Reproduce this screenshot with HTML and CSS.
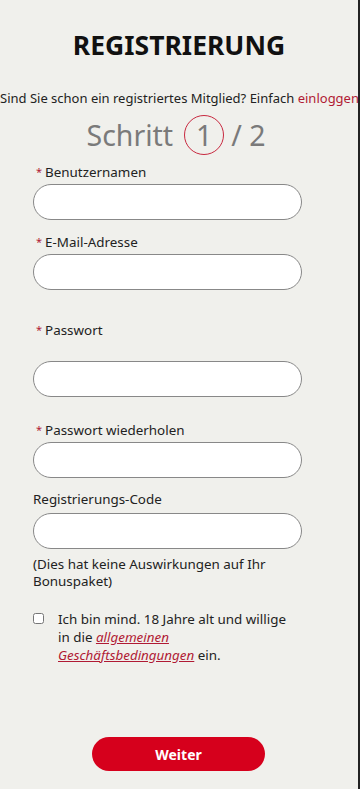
FILE: index.html
```html
<!DOCTYPE html>
<html lang="de">
<head>
    <meta charset="UTF-8">
    <meta name="viewport" content="width=device-width, initial-scale=1.0">
    <title>Registrierung</title>
    <link rel="stylesheet" href="styles.css">
</head>
<body>
    <div class="page">
        <h1 class="title">REGISTRIERUNG</h1>
        <p class="intro">Sind Sie schon ein registriertes Mitglied? Einfach <a href="#" class="red-link">einloggen</a></p>
        <div class="steps">
            <span>Schritt</span>
            <span class="step-current">1</span>
            <span class="step-total">/ 2</span>
        </div>

        <form class="reg-form" onsubmit="return false">
            <div class="field field-user">
                <label><span class="req">*</span>Benutzernamen</label>
                <input type="text" class="text-input">
            </div>
            <div class="field field-mail">
                <label><span class="req">*</span>E-Mail-Adresse</label>
                <input type="email" class="text-input">
            </div>
            <div class="field field-pass">
                <label><span class="req">*</span>Passwort</label>
                <input type="password" class="text-input">
            </div>
            <div class="field field-repeat">
                <label><span class="req">*</span>Passwort wiederholen</label>
                <input type="password" class="text-input">
            </div>
            <div class="field field-code">
                <label>Registrierungs-Code</label>
                <input type="text" class="text-input">
                <p class="note">(Dies hat keine Auswirkungen auf Ihr Bonuspaket)</p>
            </div>
            <div class="terms">
                <input type="checkbox" id="agb">
                <label for="agb">Ich bin mind. 18 Jahre alt und willige in die <a href="#" class="agb-link">allgemeinen Geschäftsbedingungen</a> ein.</label>
            </div>
            <div class="actions">
                <button type="submit" class="next-btn">Weiter</button>
            </div>
        </form>
    </div>
</body>
</html>
```

FILE: styles.css
```css
body, html {
    margin: 0;
    padding: 0;
    background-color: #f0f0ec;
    font-family: "Noto Sans", "Open Sans", Arial, sans-serif;
    color: #222;
}

body {
    border-right: 2px solid #222;
    min-height: 789px;
    box-sizing: border-box;
    overflow: hidden;
}

.page {
    padding-top: 27px;
}

.title {
    margin: 0;
    text-align: center;
    font-size: 26.5px;
    font-weight: 700;
    color: #111;
}

.intro {
    margin: 26px 0 0;
    font-size: 13px;
    text-align: center;
    white-space: nowrap;
    color: #222;
}

.red-link {
    color: #b01a34;
    text-decoration: none;
}

.steps {
    display: flex;
    justify-content: center;
    align-items: center;
    margin-top: 8px;
    padding-right: 6px;
    height: 40px;
    font-size: 28.5px;
    color: #7a7a7a;
}

.step-current {
    display: flex;
    align-items: center;
    justify-content: center;
    width: 40px;
    height: 40px;
    margin: 0 7px 0 11px;
    border: 1px solid #c8283f;
    border-radius: 50%;
    box-sizing: border-box;
}

.reg-form {
    width: 269px;
    margin: 8px 0 0 33px;
}

.field label {
    display: block;
    font-size: 13.4px;
    line-height: 18px;
    margin: 0 0 2px;
}

.req {
    color: #b01a34;
    font-size: 11px;
    margin: 0 3px 0 3px;
    position: relative;
    top: -1px;
}

.field-mail {
    margin-top: 13px;
}

.field-pass {
    margin-top: 31px;
}

.field-pass label {
    margin-bottom: 21px;
}

.field-repeat {
    margin-top: 24px;
}

.field-code {
    margin-top: 12px;
}

.field-code label {
    margin-bottom: 5px;
}

.text-input {
    display: block;
    width: 100%;
    height: 36px;
    box-sizing: border-box;
    border: 1px solid #888;
    border-radius: 18px;
    background: #fff;
    padding: 0 14px;
    font-size: 14px;
    outline: none;
}

.note {
    margin: 7px 0 0;
    font-size: 13.4px;
    line-height: 17px;
}

.terms {
    display: flex;
    align-items: flex-start;
    margin-top: 20px;
    font-size: 13.4px;
    line-height: 18px;
}

.terms input {
    width: 11px;
    height: 11px;
    margin: 3px 14px 0 0;
    flex: none;
}

.terms label {
    width: 230px;
}

.agb-link {
    color: #b01a34;
    font-style: italic;
}

.actions {
    display: flex;
    justify-content: center;
    width: 173px;
    margin: 73px 0 0 59px;
}

.next-btn {
    width: 173px;
    height: 34px;
    border: none;
    border-radius: 17px;
    background-color: #d6001c;
    color: #fff;
    font-family: inherit;
    font-size: 14px;
    font-weight: 700;
    cursor: pointer;
}
```
